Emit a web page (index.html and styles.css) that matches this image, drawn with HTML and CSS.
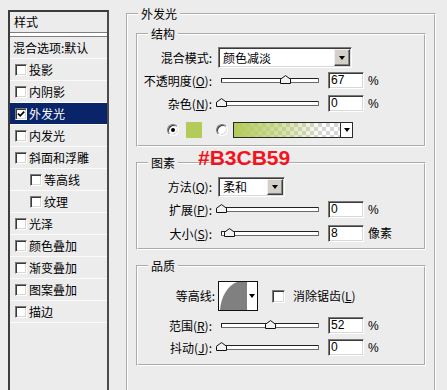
FILE: index.html
```html
<!DOCTYPE html>
<html lang="zh-CN">
<head>
<meta charset="utf-8">
<title>图层样式 - 外发光</title>
<link rel="stylesheet" href="styles.css">
</head>
<body>
<div class="dialog">
  <aside class="styles-panel">
    <div class="panel-head">样式</div>
    <div class="item blend">混合选项:默认</div>
    <div class="item"><span class="cb"></span>投影</div>
    <div class="item"><span class="cb"></span>内阴影</div>
    <div class="item selected"><span class="cb"><svg viewBox="0 0 10 10" width="10" height="10"><polyline points="2,4.6 4.2,6.8 8.2,2.6" fill="none" stroke="#000" stroke-width="1.7"/></svg></span>外发光</div>
    <div class="item"><span class="cb"></span>内发光</div>
    <div class="item"><span class="cb"></span>斜面和浮雕</div>
    <div class="item indent"><span class="cb"></span>等高线</div>
    <div class="item indent"><span class="cb"></span>纹理</div>
    <div class="item"><span class="cb"></span>光泽</div>
    <div class="item"><span class="cb"></span>颜色叠加</div>
    <div class="item"><span class="cb"></span>渐变叠加</div>
    <div class="item"><span class="cb"></span>图案叠加</div>
    <div class="item"><span class="cb"></span>描边</div>
  </aside>

  <main class="main">
    <fieldset class="group outer">
      <legend>外发光</legend>

      <fieldset class="group sub structure">
        <legend>结构</legend>
        <div class="frow r-mode">
          <span class="lbl">混合模式:</span>
          <div class="select s-mode"><span class="val">颜色减淡</span><span class="drop"></span></div>
        </div>
        <div class="frow r-opacity">
          <span class="lbl">不透明度(<u>O</u>):</span>
          <div class="track"><span class="thumb" style="left:67%"><svg viewBox="0 0 11 9" width="11" height="9"><polygon points="0.5,8.5 0.5,4.2 5.5,0.6 10.5,4.2 10.5,8.5" fill="#f2f2f2" stroke="#111"/></svg></span></div>
          <div class="num">67</div><span class="unit">%</span>
        </div>
        <div class="frow r-noise">
          <span class="lbl">杂色(<u>N</u>):</span>
          <div class="track"><span class="thumb" style="left:0%"><svg viewBox="0 0 11 9" width="11" height="9"><polygon points="0.5,8.5 0.5,4.2 5.5,0.6 10.5,4.2 10.5,8.5" fill="#f2f2f2" stroke="#111"/></svg></span></div>
          <div class="num">0</div><span class="unit">%</span>
        </div>
        <div class="frow r-color">
          <span class="radio on"></span>
          <span class="swatch"></span>
          <span class="radio r2"></span>
          <div class="gradbox"><span class="grad"></span><span class="gdrop"></span></div>
        </div>
      </fieldset>

      <fieldset class="group sub elements">
        <legend>图素</legend>
        <div class="frow r-method">
          <span class="lbl">方法(<u>Q</u>):</span>
          <div class="select s-method"><span class="val">柔和</span><span class="drop"></span></div>
        </div>
        <div class="frow r-spread">
          <span class="lbl">扩展(<u>P</u>):</span>
          <div class="track"><span class="thumb" style="left:0%"><svg viewBox="0 0 11 9" width="11" height="9"><polygon points="0.5,8.5 0.5,4.2 5.5,0.6 10.5,4.2 10.5,8.5" fill="#f2f2f2" stroke="#111"/></svg></span></div>
          <div class="num">0</div><span class="unit">%</span>
        </div>
        <div class="frow r-size">
          <span class="lbl">大小(<u>S</u>):</span>
          <div class="track"><span class="thumb" style="left:8%"><svg viewBox="0 0 11 9" width="11" height="9"><polygon points="0.5,8.5 0.5,4.2 5.5,0.6 10.5,4.2 10.5,8.5" fill="#f2f2f2" stroke="#111"/></svg></span></div>
          <div class="num">8</div><span class="unit">像素</span>
        </div>
      </fieldset>

      <fieldset class="group sub quality">
        <legend>品质</legend>
        <div class="frow r-contour">
          <span class="lbl wide">等高线:</span>
          <div class="contour">
            <svg class="curve" viewBox="0 0 28 28" width="28" height="28"><path d="M1 28 C2 15 8 4 18 0 L28 0 L28 28 Z" fill="#808080"/></svg>
            <span class="cdrop"></span>
          </div>
          <span class="cb aa"></span><span class="aa-text">消除锯齿(<u>L</u>)</span>
        </div>
        <div class="frow r-range">
          <span class="lbl">范围(<u>R</u>):</span>
          <div class="track"><span class="thumb" style="left:51%"><svg viewBox="0 0 11 9" width="11" height="9"><polygon points="0.5,8.5 0.5,4.2 5.5,0.6 10.5,4.2 10.5,8.5" fill="#f2f2f2" stroke="#111"/></svg></span></div>
          <div class="num">52</div><span class="unit">%</span>
        </div>
        <div class="frow r-jitter">
          <span class="lbl">抖动(<u>J</u>):</span>
          <div class="track"><span class="thumb" style="left:0%"><svg viewBox="0 0 11 9" width="11" height="9"><polygon points="0.5,8.5 0.5,4.2 5.5,0.6 10.5,4.2 10.5,8.5" fill="#f2f2f2" stroke="#111"/></svg></span></div>
          <div class="num">0</div><span class="unit">%</span>
        </div>
      </fieldset>
    </fieldset>
  </main>

  <div class="annot">#B3CB59</div>
</div>
</body>
</html>
```

FILE: styles.css
```css
* { box-sizing: border-box; }

html, body {
  margin: 0;
  height: 100%;
  overflow: hidden;
  background: #ececec;
}

body {
  font-family: "Noto Sans CJK SC", "Liberation Sans", sans-serif;
  font-size: 12px;
  line-height: 14px;
  color: #000;
}

u { text-decoration: underline; text-underline-offset: 1px; }

.dialog {
  position: relative;
  display: flex;
  align-items: flex-start;
  padding-left: 8px;
  height: 390px;
  overflow: hidden;
}

/* ---------- left styles list ---------- */
.styles-panel {
  width: 101px;
  height: 400px;
  margin-top: 10px;
  border: 2px solid #3c3c3c;
  border-right-color: #4a4a4a;
  background: #ececec;
  flex: none;
}

.panel-head {
  line-height: 20px;
  padding-left: 4px;
}
.panel-head::after {
  content: "";
  display: block;
  height: 3px;
  margin-left: -4px;
  border-top: 1px solid #7c7c7c;
  border-bottom: 1px solid #7c7c7c;
  background: #fff;
}

.item {
  display: flex;
  align-items: center;
  height: 22px;
  padding-left: 5px;
  border-bottom: 1px solid #fbfbfb;
  white-space: nowrap;
}
.item.blend { padding-left: 3px; }
.item.indent { padding-left: 20px; }
.item.selected { background: #0a246a; color: #fff; }

.cb {
  width: 12px;
  height: 12px;
  margin-right: 2px;
  flex: none;
  background: #fff;
  border: 1px solid;
  border-color: #7a7a7a #ffffff #ffffff #7a7a7a;
  box-shadow: inset 1px 1px 0 #3a3a3a, inset -1px -1px 0 #d8d8d8;
  display: flex;
  align-items: center;
  justify-content: center;
}
.cb svg { display: block; }

/* ---------- right side ---------- */
.main {
  margin-left: 17px;
  margin-top: 7px;
  flex: none;
}

.group {
  margin: 0;
  min-width: 0;
  border: 2px groove #ffffff;
}
.group legend {
  padding: 0 3px;
  line-height: 14px;
}

.outer {
  width: 310px;
  height: 420px;
  padding: 6px 8px 0;
}
.outer > legend { margin-left: 2px; }

.sub { padding: 0; }
.sub > legend { margin-left: 10px; }

.structure { padding: 6px 0 6px; }
.elements { margin-top: 9px; padding: 7px 0 5px; }
.quality { margin-top: 9px; padding: 8px 0 7px; }

.frow {
  display: flex;
  align-items: center;
  height: 19px;
  white-space: nowrap;
}
.lbl {
  width: 74px;
  text-align: right;
  flex: none;
}
.lbl.wide { width: 77px; }

.r-mode { height: 21px; }
.r-opacity { margin-top: 3px; }
.r-noise { margin-top: 4px; }
.r-color { margin-top: 8px; height: 18px; }
.r-method { height: 20px; }
.r-spread { margin-top: 3px; }
.r-size { margin-top: 5px; }
.r-contour { height: 30px; }
.r-range { margin-top: 5px; }
.r-jitter { margin-top: 3px; }

/* select */
.select {
  margin-left: 6px;
  display: flex;
  align-items: center;
  justify-content: space-between;
  background: #fff;
  border: 1px solid;
  border-color: #7a7a7a #ffffff #ffffff #7a7a7a;
  box-shadow: inset 1px 1px 0 #3a3a3a, inset -1px -1px 0 #d8d8d8;
  padding-left: 4px;
}
.s-mode { width: 134px; height: 21px; }
.s-method { width: 67px; height: 20px; }

.drop {
  width: 16px;
  height: calc(100% - 2px);
  margin-right: 1px;
  background: #d4d0c8;
  border: 1px solid;
  border-color: #f0f0f0 #404040 #404040 #f0f0f0;
  box-shadow: inset -1px -1px 0 #808080;
  display: flex;
  align-items: center;
  justify-content: center;
}
.drop::after, .gdrop::after, .cdrop::after {
  content: "";
  width: 0;
  height: 0;
  border-left: 3.5px solid transparent;
  border-right: 3.5px solid transparent;
  border-top: 4px solid #000;
}

/* slider */
.track {
  position: relative;
  margin-left: 9px;
  width: 98px;
  height: 5px;
  flex: none;
  background: #fff;
  border: 1px solid #222;
  border-bottom-color: #6a6a6a;
  border-right-color: #6a6a6a;
  border-radius: 1px;
}
.thumb {
  position: absolute;
  top: -4px;
  margin-left: -6px;
  width: 11px;
  height: 9px;
}
.thumb svg { display: block; }

/* numeric field */
.num {
  margin-left: 9px;
  width: 36px;
  height: 17px;
  flex: none;
  background: #fff;
  border: 1px solid;
  border-color: #7a7a7a #ffffff #ffffff #7a7a7a;
  box-shadow: inset 1px 1px 0 #3a3a3a, inset -1px -1px 0 #d8d8d8;
  padding-left: 2px;
  font-family: "Liberation Sans", sans-serif;
  line-height: 15px;
}
.unit {
  margin-left: 4px;
  font-family: "Liberation Sans", "Noto Sans CJK SC", sans-serif;
}

/* color row */
.radio {
  width: 12px;
  height: 12px;
  flex: none;
  border-radius: 50%;
  background: #fff;
  border: 1px solid;
  border-color: #7a7a7a #ffffff #ffffff #7a7a7a;
  box-shadow: inset 1px 1px 0 #3a3a3a, inset -1px -1px 0 #d8d8d8;
  display: flex;
  align-items: center;
  justify-content: center;
  margin-left: 29px;
}
.radio.on::after {
  content: "";
  width: 4px;
  height: 4px;
  border-radius: 50%;
  background: #000;
}
.radio.r2 { margin-left: 14px; }

.swatch {
  width: 16px;
  height: 16px;
  margin-left: 7px;
  background: #b3cb59;
  flex: none;
}

.gradbox {
  margin-left: 5px;
  width: 120px;
  height: 16px;
  display: flex;
  border: 1px solid #2a2a2a;
  background: #fff;
}
.grad {
  flex: 1;
  background:
    linear-gradient(to right, #b3cb59 0%, rgba(179, 203, 89, 0.55) 45%, rgba(179, 203, 89, 0) 85%),
    repeating-conic-gradient(#d6d6d6 0 25%, #ffffff 0 50%) 0 0 / 8px 8px;
}
.gdrop {
  width: 12px;
  border-left: 1px solid #2a2a2a;
  display: flex;
  align-items: center;
  justify-content: center;
}

/* contour */
.contour {
  margin-left: 3px;
  width: 40px;
  height: 30px;
  flex: none;
  display: flex;
  border: 1px solid #111;
  background: #fff;
}
.curve { display: block; }
.cdrop {
  flex: 1;
  display: flex;
  align-items: center;
  justify-content: center;
}
.cb.aa { margin-left: 14px; width: 13px; height: 13px; }
.aa-text { margin-left: 6px; }

/* annotation overlay */
.annot {
  position: absolute;
  left: 198px;
  top: 147px;
  font-family: "Liberation Sans", sans-serif;
  font-weight: bold;
  font-size: 21px;
  line-height: 21px;
  color: #f2141c;
  white-space: nowrap;
}
```
